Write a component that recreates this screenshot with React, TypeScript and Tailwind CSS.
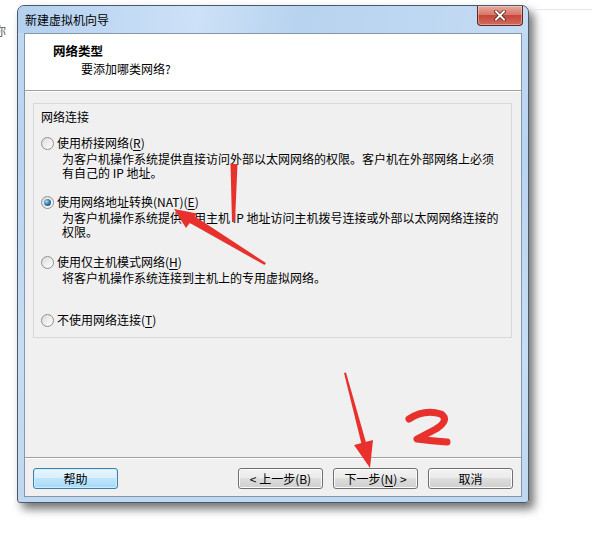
import React from "react";

const font = { fontFamily: '"Noto Sans CJK SC", "Noto Sans", sans-serif' };

function Radio({ checked }: { checked?: boolean }) {
  return (
    <span className="w-[13px] h-[13px] shrink-0 rounded-full border border-[#8e8f8f] bg-[linear-gradient(135deg,#dcdcdc,#ffffff)] flex items-center justify-center">
      {checked && (
        <span className="w-[7px] h-[7px] rounded-full bg-[radial-gradient(circle_at_35%_35%,#a9dcf7,#2a6d9c_55%,#123f63)]" />
      )}
    </span>
  );
}

function Option({ label, hot, checked, lines, mt }: { label: string; hot: string; checked?: boolean; lines: string[]; mt: string }) {
  return (
    <div className={mt}>
      <div className="flex items-center h-[14px] leading-[14px]">
        <Radio checked={checked} />
        <span className="ml-[3px]">
          {label}(<span className="underline underline-offset-2">{hot}</span>)
        </span>
      </div>
      {lines.length > 0 && (
        <div className="ml-[21px] mt-[2px] leading-[14px]">
          {lines.map((l, i) => (
            <div key={i}>{l}</div>
          ))}
        </div>
      )}
    </div>
  );
}

function Button({ children, primary }: { children: React.ReactNode; primary?: boolean }) {
  return (
    <div
      className={
        "w-[85px] h-[21px] rounded-[3px] border flex items-center justify-center text-[12px] leading-none " +
        (primary
          ? "border-[#3c7fb1] bg-[linear-gradient(#eaf6fd_0%,#d9f0fc_45%,#bee6fd_50%,#a7d9f5_100%)] shadow-[inset_0_0_0_1px_#cdeefe]"
          : "border-[#707070] bg-[linear-gradient(#f2f2f2_0%,#ebebeb_45%,#dddddd_50%,#cfcfcf_100%)] shadow-[inset_0_0_0_1px_#fbfbfb]")
      }
    >
      {children}
    </div>
  );
}

export default function App() {
  return (
    <div className="relative w-[592px] h-[541px] bg-white overflow-hidden text-black text-[12px]" style={font}>
      {/* bits of the app behind the dialog */}
      <span className="absolute left-[-6px] top-[22px] text-[12px] text-[#555]">你</span>
      <div className="absolute left-[530px] right-0 top-[9px] h-px bg-[#e3e6ea]" />

      <div className="ml-[17px] mt-[5px] w-[512px] h-[498px] flex flex-col rounded-t-[7px] rounded-b-[3px] border border-[#4a5a6a] bg-[linear-gradient(#c2daf3,#b9d4f0_30%,#c6ddf4_70%,#bfd7f0)] shadow-[5px_6px_10px_rgba(0,0,0,0.55)]">
        {/* title bar */}
        <div className="h-[27px] flex items-start justify-between bg-[linear-gradient(100deg,#b3d0f0_0%,#cde1f7_35%,#b8d3ef_55%,#c4dbf4_100%)] rounded-t-[7px]">
          <div className="ml-[7px] mt-[7px] leading-[14px]">新建虚拟机向导</div>
          <div className="mr-[5px] w-[46px] h-[20px] rounded-b-[4px] border border-t-0 border-[#5a2a24] bg-[linear-gradient(#e9a99f_0%,#d8776a_45%,#c7473a_50%,#d26b5c_100%)] flex items-center justify-center shadow-[inset_0_0_0_1px_rgba(255,255,255,0.35)]">
            <svg width="12" height="11" viewBox="0 0 12 11">
              <path d="M2 1.5 L10 9.5 M10 1.5 L2 9.5" stroke="#3b1a16" strokeWidth="3.4" strokeLinecap="square" />
              <path d="M2 1.5 L10 9.5 M10 1.5 L2 9.5" stroke="#ffffff" strokeWidth="2" strokeLinecap="square" />
            </svg>
          </div>
        </div>

        {/* client area */}
        <div className="mx-[6px] h-[464px] flex flex-col border border-[#8596a8] bg-[#f0f0f0]">
          <div className="h-[57px] bg-white border-b border-[#a0a0a0] pl-[28px] pt-[9px]">
            <div className="font-bold text-[12.5px] leading-[16px]">网络类型</div>
            <div className="ml-[28px] mt-[3px] leading-[14px]">要添加哪类网络?</div>
          </div>
          <div className="h-px bg-white" />

          <div className="mt-[11px] ml-[8px] mr-[9px] h-[235px] border border-[#d5d9dd] pl-[7px] pt-[6px]">
            <div className="leading-[14px]">网络连接</div>
            <Option
              mt="mt-[12px]"
              label="使用桥接网络"
              hot="R"
              lines={["为客户机操作系统提供直接访问外部以太网网络的权限。客户机在外部网络上必须", "有自己的 IP 地址。"]}
            />
            <Option
              mt="mt-[15px]"
              checked
              label="使用网络地址转换(NAT)"
              hot="E"
              lines={["为客户机操作系统提供使用主机 IP 地址访问主机拨号连接或外部以太网网络连接的", "权限。"]}
            />
            <Option
              mt="mt-[16px]"
              label="使用仅主机模式网络"
              hot="H"
              lines={["将客户机操作系统连接到主机上的专用虚拟网络。"]}
            />
            <Option mt="mt-[28px]" label="不使用网络连接" hot="T" lines={[]} />
          </div>

          <div className="flex-1" />
          <div className="h-px bg-[#a0a0a0]" />
          <div className="h-px bg-white" />
          <div className="mt-[9px] mb-[7px] ml-[8px] mr-[8px] flex items-center">
            <Button primary>帮助</Button>
            <div className="flex-1" />
            <div className="flex gap-[10px]">
              <Button>&lt; 上一步(B)</Button>
              <Button>
                下一步(<span className="underline underline-offset-2">N</span>) &gt;
              </Button>
              <Button>取消</Button>
            </div>
          </div>
        </div>
      </div>

      {/* red annotations drawn over the screenshot */}
      <svg className="absolute inset-0 pointer-events-none" width="592" height="541" viewBox="0 0 592 541">
        <polygon points="230.5,164 237.5,164 235,222 232,222" fill="#e8302c" />
        <polygon points="174,209 197,213.5 186,228" fill="#e8302c" />
        <polygon points="189,222.5 193.5,215.5 266,263 264.5,265" fill="#e8302c" />
        <polygon points="370,468 354,445 373,440" fill="#e8302c" />
        <polygon points="361.5,444 366,442.5 346,372.5 344,373" fill="#e8302c" />
        <path
          d="M409 419 Q424 409 441 414 Q450 420 436 429 L417 439 Q432 441 447 442"
          fill="none"
          stroke="#e8302c"
          strokeWidth="7"
          strokeLinecap="round"
          strokeLinejoin="round"
        />
      </svg>
    </div>
  );
}
